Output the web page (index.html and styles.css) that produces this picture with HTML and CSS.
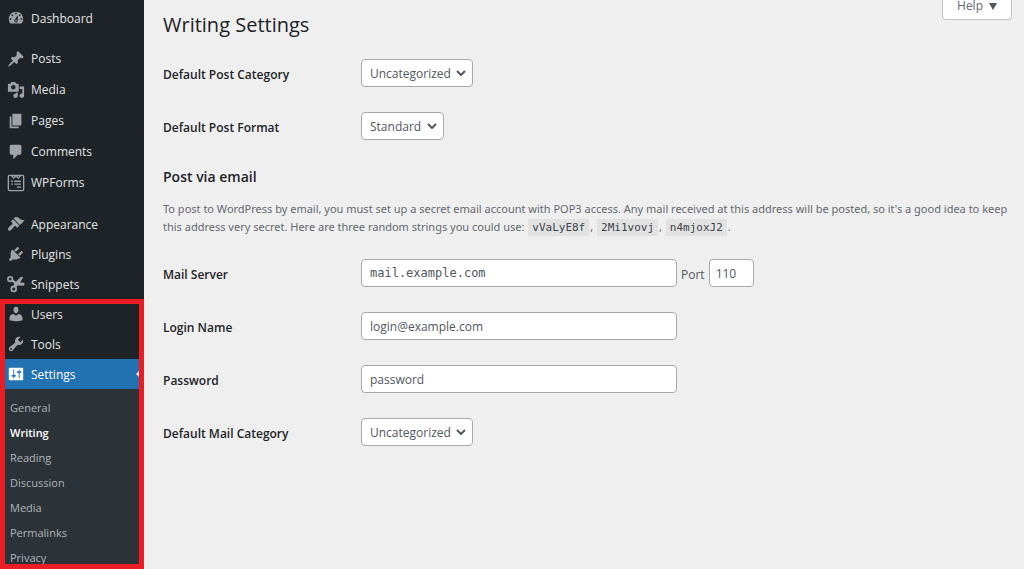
FILE: index.html
```html
<!DOCTYPE html>
<html lang="en">
<head>
    <meta charset="UTF-8">
    <meta name="viewport" content="width=device-width, initial-scale=1.0">
    <title>Writing Settings</title>
    <link rel="stylesheet" href="styles.css">
</head>
<body>
    <nav class="admin-menu">
        <ul class="menu-top">
            <li><a href="#"><svg viewBox="0 0 20 20"><path d="M3.76 16h12.48c1.1-1.37 1.76-3.11 1.76-5 0-4.42-3.58-8-8-8s-8 3.58-8 8c0 1.89.66 3.63 1.76 5zM10 4c.55 0 1 .45 1 1s-.45 1-1 1-1-.45-1-1 .45-1 1-1zM6 6c.55 0 1 .45 1 1s-.45 1-1 1-1-.45-1-1 .45-1 1-1zm8 0c.55 0 1 .45 1 1s-.45 1-1 1-1-.45-1-1 .45-1 1-1zm-5.37 5.55L12 7v6c0 1.1-.9 2-2 2s-2-.9-2-2c0-.57.24-1.08.63-1.45zM4 10c.55 0 1 .45 1 1s-.45 1-1 1-1-.45-1-1 .45-1 1-1zm12 0c.55 0 1 .45 1 1s-.45 1-1 1-1-.45-1-1 .45-1 1-1zm-5 3c0-.55-.45-1-1-1s-1 .45-1 1 .45 1 1 1 1-.45 1-1z"/></svg>Dashboard</a></li>
        </ul>
        <ul class="menu-content">
            <li><a href="#"><svg viewBox="0 0 20 20"><path d="M10.44 3.02l1.82-1.82 6.36 6.35-1.83 1.82c-1.05-.68-2.48-.57-3.41.36l-.75.75c-.92.93-1.04 2.35-.35 3.41l-1.83 1.82-2.41-2.41-2.8 2.79c-.42.42-3.38 2.71-3.8 2.29s1.86-3.39 2.28-3.81l2.79-2.79L4.1 9.36l1.83-1.82c1.05.69 2.48.57 3.4-.36l.75-.75c.93-.92 1.05-2.35.36-3.41z"/></svg>Posts</a></li>
            <li><a href="#"><svg viewBox="0 0 20 20"><path d="M13 11V4c0-.55-.45-1-1-1h-1.67L9 1H5L3.67 3H2c-.55 0-1 .45-1 1v7c0 .55.45 1 1 1h10c.55 0 1-.45 1-1zM7 4.5c1.38 0 2.5 1.12 2.5 2.5S8.38 9.5 7 9.5 4.5 8.38 4.5 7 5.62 4.5 7 4.5zM14 6h5v10.5c0 1.38-1.12 2.5-2.5 2.5S14 17.88 14 16.5s1.12-2.5 2.5-2.5c.17 0 .34.02.5.05V9h-3V6zm-4 8.05V13h2v3.5c0 1.38-1.12 2.5-2.5 2.5S7 17.88 7 16.5 8.12 14 9.5 14c.17 0 .34.02.5.05z"/></svg>Media</a></li>
            <li><a href="#"><svg viewBox="0 0 20 20"><path d="M6 15V2h10v13H6zm-1 1h8v2H3V5h2v11z"/></svg>Pages</a></li>
            <li><a href="#"><svg viewBox="0 0 20 20"><path d="M5 2h9c1.1 0 2 .9 2 2v7c0 1.1-.9 2-2 2h-2l-5 5v-5H5c-1.1 0-2-.9-2-2V4c0-1.1.9-2 2-2z"/></svg>Comments</a></li>
            <li><a href="#"><svg class="outline" viewBox="0 0 20 20"><rect x="1.5" y="1.5" width="17" height="17" rx="1.5"/><path d="M5 2l2.500 2.500L10 2l2.500 2.500L15 2M4.500 8h2M8 8h7.500M4.500 11.200h2M8 11.200h7.500M11 14.500h4.500"/></svg>WPForms</a></li>
        </ul>
        <ul>
            <li><a href="#"><svg viewBox="0 0 20 20"><path d="M14.480 11.060L7.410 3.990l1.500-1.500c.5-.56 2.300-.47 3.510.32 1.210.8 1.430 1.280 2.910 2.100 1.180.64 2.450 1.260 4.450.85zm-.71.71L6.700 4.700 4.930 6.470c-.39.39-.39 1.020 0 1.410l1.060 1.060c.39.39.39 1.030 0 1.420-.6.6-1.430 1.110-2.210 1.690-.35.26-.7.53-1.010.84C1.430 14.230.4 16.080 1.400 17.070c.99 1 2.840-.03 4.180-1.360.31-.31.58-.66.85-1.020.57-.78 1.080-1.610 1.690-2.210.39-.39 1.020-.39 1.410 0l1.060 1.060c.39.39 1.020.39 1.410 0z"/></svg>Appearance</a></li>
            <li><a href="#"><svg viewBox="0 0 20 20"><path d="M13.110 4.360L9.870 7.600 8 5.730l3.240-3.240c.35-.34 1.050-.2 1.560.32.52.51.66 1.210.31 1.550zm-8 1.770l.91-1.120 9.010 9.010-1.190.84c-.71.71-2.630 1.160-3.820 1.160H6.140L4.900 17.260c-.59.59-1.540.59-2.120 0-.59-.58-.59-1.530 0-2.120l1.240-1.240v-3.880c0-1.130.4-3.190 1.090-3.890zm7.260 3.970l3.240-3.240c.34-.35 1.040-.21 1.550.31.52.51.66 1.210.31 1.550l-3.240 3.250z"/></svg>Plugins</a></li>
            <li><a href="#"><svg class="scissors" viewBox="0 0 20 20"><circle cx="3.500" cy="4.500" r="2.500"/><circle cx="7.500" cy="15.500" r="2.700"/><path class="blade" d="M5 6.800L6.800 5.200 10 7.500l4.500-4.800c1.200-1 2.500-1 3.500-.2l-3.500 5.700 4.500.3c.8 1 .5 2.500-.5 3.500l-6.500-.3-2.500 2.300L7.300 12.800l.7-3z"/></svg>Snippets</a></li>
        </ul>
        <div class="menu-marked">
            <ul>
                <li><a href="#"><svg viewBox="0 0 20 20"><path d="M10 9.250c-2.270 0-2.730-3.440-2.730-3.440C7 4.020 7.820 2 9.970 2c2.160 0 2.980 2.020 2.710 3.810 0 0-.41 3.440-2.680 3.440zm0 2.570L12.720 10c2.390 0 4.520 2.330 4.520 4.530v2.490s-3.650 1.130-7.240 1.130c-3.650 0-7.240-1.130-7.240-1.130v-2.490c0-2.250 1.940-4.480 4.470-4.480z"/></svg>Users</a></li>
                <li><a href="#"><svg viewBox="0 0 20 20"><path d="M16.680 9.770c-1.340 1.340-3.300 1.670-4.950.99l-5.410 6.520c-.99.99-2.590.99-3.580 0s-.99-2.590 0-3.570l6.520-5.420c-.68-1.650-.35-3.610.99-4.950 1.280-1.280 3.120-1.620 4.720-1.060l-2.890 2.890 2.820 2.820 2.860-2.870c.53 1.580.18 3.390-1.080 4.650zM3.810 16.210c.4.39 1.040.39 1.430 0 .4-.4.4-1.040 0-1.430-.39-.4-1.030-.4-1.430 0-.39.39-.39 1.030 0 1.430z"/></svg>Tools</a></li>
                <li><a class="current" href="#"><svg viewBox="0 0 20 20"><path d="M18 16V4c0-.55-.45-1-1-1H3c-.55 0-1 .45-1 1v12c0 .55.45 1 1 1h14c.55 0 1-.45 1-1zM8 11h1c.55 0 1 .45 1 1s-.45 1-1 1H8v1.500c0 .28-.22.5-.5.5s-.5-.22-.5-.5V13H6c-.55 0-1-.45-1-1s.45-1 1-1h1V5.500c0-.28.22-.5.5-.5s.5.22.5.5V11zm5-2h-1c-.55 0-1-.45-1-1s.45-1 1-1h1V5.500c0-.28.22-.5.5-.5s.5.22.5.5V7h1c.55 0 1 .45 1 1s-.45 1-1 1h-1v5.500c0 .28-.22.5-.5.5s-.5-.22-.5-.5V9z"/></svg>Settings</a></li>
            </ul>
            <ul class="submenu">
                <li><a href="#">General</a></li>
                <li><a class="current" href="#">Writing</a></li>
                <li><a href="#">Reading</a></li>
                <li><a href="#">Discussion</a></li>
                <li><a href="#">Media</a></li>
                <li><a href="#">Permalinks</a></li>
                <li><a href="#">Privacy</a></li>
            </ul>
        </div>
    </nav>

    <main class="content">
        <button class="help-tab" type="button">Help <svg viewBox="0 0 8 7"><path d="M0 0h8L4 7z"/></svg></button>

        <h1>Writing Settings</h1>

        <form>
            <div class="form-table">
                <label for="category">Default Post Category</label>
                <div class="field">
                    <select id="category"><option>Uncategorized</option></select>
                </div>
                <label for="format">Default Post Format</label>
                <div class="field">
                    <select id="format"><option>Standard</option></select>
                </div>
            </div>

            <h2>Post via email</h2>
            <p>To post to WordPress by email, you must set up a secret email account with POP3 access. Any mail received at this address will be posted, so it's a good idea to keep this address very secret. Here are three random strings you could use: <code>vVaLyE8f</code>, <code>2Mi1vovj</code>, <code>n4mjoxJ2</code>.</p>

            <div class="form-table">
                <label for="server">Mail Server</label>
                <div class="field">
                    <input class="regular code" type="text" id="server" value="mail.example.com">
                    <label class="port-label" for="port">Port</label>
                    <input class="small" type="text" id="port" value="110">
                </div>
                <label for="login">Login Name</label>
                <div class="field">
                    <input class="regular" type="text" id="login" value="login@example.com">
                </div>
                <label for="pass">Password</label>
                <div class="field">
                    <input class="regular" type="text" id="pass" value="password">
                </div>
                <label for="mail-category">Default Mail Category</label>
                <div class="field">
                    <select id="mail-category"><option>Uncategorized</option></select>
                </div>
            </div>
        </form>
    </main>
</body>
</html>
```
FILE: styles.css
```css
* {
    box-sizing: border-box;
}
body {
    display: flex;
    height: 100vh;
    margin: 0;
    overflow: hidden;
    background: #efefef;
    color: #3c434a;
    font-family: "Open Sans", "Noto Sans", sans-serif;
    font-size: 12px;
}
ul {
    list-style: none;
    margin: 0;
    padding: 0;
}

/* Side menu */
.admin-menu {
    display: flex;
    flex-direction: column;
    flex: none;
    width: 144px;
    padding-top: 3px;
    background: #1d2327;
}
.admin-menu a {
    display: flex;
    align-items: center;
    gap: 6px;
    height: 30px;
    padding-left: 7px;
    color: #e4e5e6;
    text-decoration: none;
}
.admin-menu svg {
    width: 18px;
    height: 18px;
    fill: #a0a4a8;
}
.menu-top {
    margin-bottom: 10px;
}
.menu-content {
    margin-bottom: 11px;
}
.admin-menu .menu-content a {
    height: 31px;
}
.admin-menu .outline {
    fill: none;
    stroke: #a0a4a8;
    stroke-width: 1.5;
}
.admin-menu .scissors {
    fill: none;
    stroke: #a0a4a8;
    stroke-width: 2;
}
.admin-menu .scissors .blade {
    fill: #a0a4a8;
    stroke: none;
}
.admin-menu a.current {
    position: relative;
    background: #2271b1;
    color: #fff;
}
.admin-menu .current svg {
    fill: #fff;
}
.menu-marked a.current::after {
    content: "";
    position: absolute;
    right: 5px;
    border: 3px solid transparent;
    border-right-color: #efefef;
}
.menu-marked {
    position: relative;
    display: flex;
    flex-direction: column;
    flex: 1;
    min-height: 0;
    overflow: hidden;
}
.menu-marked::after {
    content: "";
    position: absolute;
    inset: 0;
    border: 5px solid #ec1c24;
    pointer-events: none;
}
.submenu {
    flex: 1;
    padding-top: 6px;
    background: #2c3338;
}
.admin-menu .submenu a {
    height: 25px;
    padding-left: 10px;
    color: #b0b4b8;
    font-size: 11px;
}
.admin-menu .submenu a.current {
    background: none;
    color: #fff;
    font-weight: 600;
}
.menu-marked .submenu a.current::after {
    display: none;
}

/* Settings page */
.content {
    position: relative;
    flex: 1;
    padding: 10px 12px 0 19px;
}
.help-tab {
    position: absolute;
    top: 0;
    right: 12px;
    display: flex;
    align-items: center;
    gap: 6px;
    height: 20px;
    padding: 0 14px 7px;
    border: 1px solid #c3c4c7;
    border-top: 0;
    border-radius: 0 0 4px 4px;
    background: #fff;
    color: #646970;
    font-family: inherit;
    font-size: 12px;
    line-height: 12px;
}
.help-tab svg {
    width: 8px;
    height: 7px;
    fill: #50575e;
}
h1 {
    margin: 0 0 19px;
    color: #1d2327;
    font-size: 20px;
    font-weight: 400;
    line-height: 30px;
}
h2 {
    margin: 27px 0 13px;
    color: #1d2327;
    font-size: 14px;
    font-weight: 600;
    line-height: 20px;
}
p {
    margin: 0 0 22px;
    color: #646970;
    font-family: "Noto Sans", sans-serif;
    font-size: 11px;
    line-height: 18px;
}
code {
    margin: 0 1px;
    padding: 2px 4px;
    background: #e2e2e3;
    color: #3c434a;
    font-family: "DejaVu Sans Mono", monospace;
    font-size: 11px;
}
.form-table {
    display: grid;
    grid-template-columns: 198px 1fr;
    row-gap: 25px;
    align-items: center;
}
.form-table > label {
    padding-top: 3px;
    color: #1d2327;
    font-weight: 600;
}
.field {
    display: flex;
    align-items: center;
    gap: 4px;
}
.port-label {
    padding-top: 3px;
    color: #50575e;
}
input,
select {
    height: 28px;
    border: 1px solid #a7aaad;
    border-radius: 4px;
    background: #fff;
    color: #50575e;
    font-family: inherit;
    font-size: 12px;
}
input {
    padding: 0 8px;
}
.regular {
    width: 316px;
}
.small {
    width: 45px;
    padding: 0 6px;
}
.code {
    font-family: "DejaVu Sans Mono", monospace;
}
select {
    appearance: none;
    padding: 0 21px 0 8px;
    background: #fff url('data:image/svg+xml;utf8,<svg xmlns="http://www.w3.org/2000/svg" viewBox="0 0 10 6"><path d="M1 1l4 4 4-4" fill="none" stroke="%2350575e" stroke-width="2"/></svg>') no-repeat right 6px center / 10px 6px;
}
```
